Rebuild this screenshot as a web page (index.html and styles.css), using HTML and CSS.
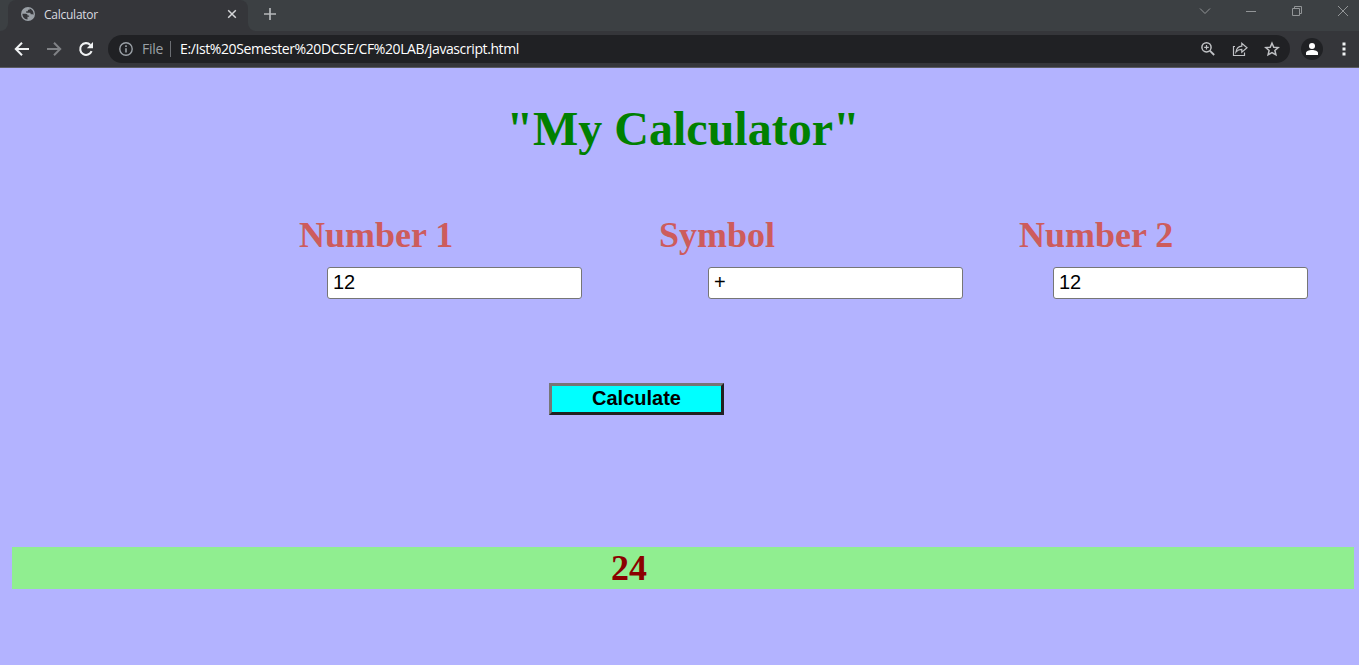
FILE: index.html
```html
<!DOCTYPE html>
<html lang="en">
<head>
<meta charset="utf-8">
<title>Calculator</title>
<link rel="stylesheet" href="styles.css">
</head>
<body>
<header class="browser">
  <div class="tab-strip">
    <div class="previous-tab"></div>
    <div class="tab">
      <svg class="globe" width="14" height="14" viewBox="0 0 14 14"><circle cx="7" cy="7" r="7" fill="#9aa0a6"/><path d="M1.400 6.700h3.200c1.600 0 2 .8 2 1.700h1.500v1.300H6.500v2.700C3.500 12.400 1.400 9.900 1.400 6.700zM8.600 1.500v1.300H6.900v1.500H5.200v1.500h3.400c.8 0 1.100.7 1.100 1.500h1.800c.5 0 .7.400.9.800.7-3-1-5.700-3.800-6.600z" fill="#35363a"/></svg>
      <span class="tab-title">Calculator</span>
      <svg width="10" height="10" viewBox="0 0 10 10"><path d="M1.200 1.200l7.600 7.600M8.800 1.200l-7.600 7.600" stroke="#d5d6d8" stroke-width="1.500"/></svg>
    </div>
    <div class="strip-rest">
      <svg class="new-tab" width="12" height="12" viewBox="0 0 12 12"><path d="M6 0v12M0 6h12" stroke="#b5b8bb" stroke-width="1.700"/></svg>
      <div class="window-buttons">
        <svg width="12" height="12" viewBox="0 0 12 12"><path d="M1 3.500l5 5 5-5" fill="none" stroke="#929597"/></svg>
        <svg width="12" height="12" viewBox="0 0 12 12"><path d="M1 6.500h10" stroke="#929597"/></svg>
        <svg width="12" height="12" viewBox="0 0 12 12"><path d="M1.500 3.500h7v7h-7zM3.500 3.500v-2h7v7h-2" fill="none" stroke="#929597"/></svg>
        <svg width="12" height="12" viewBox="0 0 12 12"><path d="M1 1l10 10M11 1L1 11" stroke="#929597"/></svg>
      </div>
    </div>
  </div>
  <div class="toolbar">
    <div class="nav">
      <svg width="16" height="16" viewBox="0 0 16 16"><path d="M15 8H2.500M8 1.800L1.800 8 8 14.200" fill="none" stroke="#f1f3f4" stroke-width="2"/></svg>
      <svg width="16" height="16" viewBox="0 0 16 16"><path d="M1 8h12.500M8 1.800L14.200 8 8 14.200" fill="none" stroke="#808286" stroke-width="2"/></svg>
      <svg width="16" height="16" viewBox="0 0 16 16"><path d="M13.600 10.200A5.900 5.900 0 1 1 12.300 3.900" fill="none" stroke="#f1f3f4" stroke-width="2.100"/><path d="M15 1v6.200H8.800z" fill="#f1f3f4"/></svg>
    </div>
    <div class="omnibox">
      <svg width="14" height="14" viewBox="0 0 14 14"><circle cx="7" cy="7" r="6.200" fill="none" stroke="#9aa0a6" stroke-width="1.400"/><path d="M7 6.200v4.300M7 3.300v1.600" stroke="#9aa0a6" stroke-width="1.600"/></svg>
      <span class="scheme">File</span>
      <span class="divider"></span>
      <span class="url">E:/Ist%20Semester%20DCSE/CF%20LAB/javascript.html</span>
      <div class="actions">
        <svg width="16" height="16" viewBox="0 0 16 16"><circle cx="6.500" cy="6.300" r="4.600" fill="none" stroke="#c0c2c5" stroke-width="1.500"/><path d="M6.500 4v4.600M4.200 6.300h4.600" stroke="#c0c2c5" stroke-width="1.200"/><path d="M9.800 9.600l4.400 4.400" stroke="#c0c2c5" stroke-width="1.800"/></svg>
        <svg width="16" height="16" viewBox="0 0 16 16"><path d="M3 5.500H1.500v9h11v-3M4 11c.6-3.900 2.300-5.500 5.800-5.800V2.300L15 6.800l-5.200 4.400V8.400C7.400 8.400 5.600 9 4 11z" fill="none" stroke="#c0c2c5" stroke-width="1.200"/></svg>
        <svg width="16" height="16" viewBox="0 0 16 16"><path d="M8 2.200l1.800 4 4.400.4-3.300 2.900 1 4.300L8 11.600l-3.900 2.200 1-4.300-3.300-2.900 4.400-.4z" fill="none" stroke="#c0c2c5" stroke-width="1.500"/></svg>
      </div>
    </div>
    <div class="avatar"><svg width="12" height="12" viewBox="0 0 12 12"><circle cx="6" cy="3" r="3" fill="#fff"/><path d="M0 12v-2c0-4 12-4 12 0v2z" fill="#fff"/></svg></div>
    <svg class="more" width="4" height="14" viewBox="0 0 4 14"><path d="M.5.500h3v3h-3zM.500 5.500h3v3h-3zM.500 10.500h3v3h-3z" fill="#f1f3f4"/></svg>
  </div>
</header>
<main class="page">
  <h1 class="title">"My Calculator"</h1>
  <div class="labels">
    <h2 class="label">Number 1</h2>
    <h2 class="label">Symbol</h2>
    <h2 class="label">Number 2</h2>
  </div>
  <div class="fields">
    <input class="field" type="text" value="12">
    <input class="field symbol" type="text" value="+">
    <input class="field second" type="text" value="12">
  </div>
  <button class="calculate">Calculate</button>
  <h2 class="result">24</h2>
</main>
</body>
</html>
```
FILE: styles.css
```css
* { box-sizing: border-box; }
body {
  margin: 0;
  height: 665px;
  overflow: hidden;
  background: #b3b3ff;
  font-family: "Liberation Serif", serif;
}
svg { display: block; flex: none; }

.browser {
  height: 68px;
  background: #35363a;
  border-bottom: 1px solid #5a5b60;
  font-family: "Open Sans", sans-serif;
}
.tab-strip {
  display: flex;
  height: 31px;
  background: linear-gradient(#3c4043 8px, #35363a 8px);
}
.previous-tab {
  width: 8px;
  background: #3c4043;
  border-radius: 0 0 8px 0;
}
.tab {
  display: flex;
  align-items: center;
  width: 240px;
  height: 31px;
  padding: 0 11px 3px 13px;
  border-radius: 8px 8px 0 0;
  background: #35363a;
}
.strip-rest {
  display: flex;
  flex: 1;
  background: #3c4043;
  border-radius: 0 0 0 8px;
}
.tab-title {
  flex: 1;
  margin-left: 9px;
  color: #dadce0;
  font-size: 12px;
  letter-spacing: -0.25px;
}
.new-tab { margin: 8px 0 0 16px; }
.window-buttons {
  display: flex;
  gap: 34px;
  margin: 5px 10px 0 auto;
}

.toolbar {
  display: flex;
  align-items: center;
  height: 36px;
}
.nav {
  display: flex;
  gap: 16px;
  width: 108px;
  padding-left: 14px;
}
.omnibox {
  display: flex;
  align-items: center;
  width: 1182px;
  height: 28px;
  padding: 0 10px 0 11px;
  border-radius: 14px;
  background: #202124;
  font-size: 14px;
  white-space: nowrap;
}
.scheme {
  width: 28px;
  margin-left: 9px;
  color: #9aa0a6;
  letter-spacing: -0.3px;
}
.divider {
  width: 1px;
  height: 16px;
  margin-right: 9px;
  background: #6b6e73;
}
.url {
  color: #fff;
  letter-spacing: -0.4px;
}
.scheme, .url { padding-bottom: 1px; }
.actions {
  display: flex;
  gap: 16px;
  margin-left: auto;
}
.avatar {
  display: grid;
  place-items: center;
  width: 22px;
  height: 22px;
  margin-left: 11px;
  border-radius: 50%;
  background: #202124;
}
.more { margin-left: 19px; }

.page { padding: 0 5px 0 12px; }
.title {
  margin: 33px 0 0;
  color: green;
  font-size: 48px;
  line-height: 55px;
  text-align: center;
}
.labels {
  display: grid;
  grid-template-columns: repeat(3, 360px);
  margin: 58px 0 0 287px;
}
.label {
  margin: 0;
  color: indianred;
  font-size: 36px;
  line-height: 42px;
}
.fields {
  display: flex;
  margin: 11px 0 0 315px;
}
.field {
  width: 255px;
  height: 32px;
  padding: 1px 5px 3px;
  border: 1px solid #767676;
  border-radius: 3px;
  color: #000;
  background: #fff;
  font: 20px "Liberation Sans", sans-serif;
}
.symbol { margin-left: 126px; }
.second { margin-left: 90px; }
.calculate {
  display: block;
  width: 175px;
  height: 32px;
  margin: 84px 0 0 537px;
  padding: 0 0 2px;
  border: 3px solid;
  border-color: #767676 #212121 #212121 #767676;
  color: #000;
  background: cyan;
  font: bold 20px "Liberation Sans", sans-serif;
}
.result {
  height: 42px;
  margin: 132px 0 0;
  padding-left: 599px;
  color: darkred;
  background: lightgreen;
  font-size: 36px;
  line-height: 42px;
}
```
